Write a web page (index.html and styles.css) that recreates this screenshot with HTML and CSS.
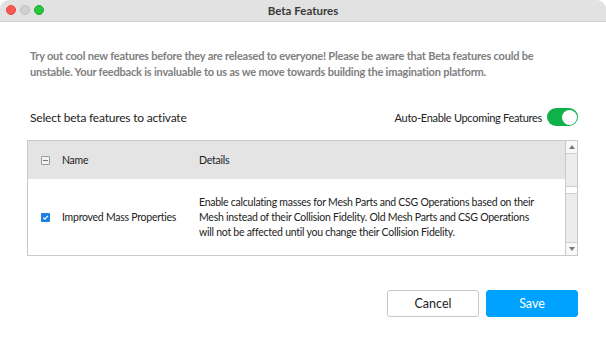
FILE: index.html
```html
<!DOCTYPE html>
<html lang="en">
  <head>
    <meta charset="UTF-8" />
    <title>Beta Features</title>
    <link rel="stylesheet" href="styles.css">
  </head>
  <body>
    <div class="window">
      <div class="titlebar">
        <div class="lights">
          <span class="light close"></span>
          <span class="light min"></span>
          <span class="light max"></span>
        </div>
        <div class="title">Beta Features</div>
      </div>
      <div class="content">
        <p class="intro">
          Try out cool new features before they are released to everyone! Please be aware that Beta features could be
          unstable. Your feedback is invaluable to us as we move towards building the imagination platform.
        </p>
        <div class="section-head">
          <span class="section-title">Select beta features to activate</span>
          <label class="auto">
            <span>Auto-Enable Upcoming Features</span>
            <span class="toggle"><span class="knob"></span></span>
          </label>
        </div>
        <div class="table-box">
          <div class="table-main">
            <div class="row head">
              <div class="cell check"><span class="box partial"></span></div>
              <div class="cell name">Name</div>
              <div class="cell details">Details</div>
            </div>
            <div class="row body-row">
              <div class="cell check">
                <span class="box checked">
                  <svg width="9" height="9" viewBox="0 0 9 9"><path d="M2.2 4.6 L3.8 6.1 L6.9 2.9" fill="none" stroke="#fff" stroke-width="1.3"/></svg>
                </span>
              </div>
              <div class="cell name">Improved Mass Properties</div>
              <div class="cell details">Enable calculating masses for Mesh Parts and CSG Operations based on their Mesh instead of their Collision Fidelity. Old Mesh Parts and CSG Operations will not be affected until you change their Collision Fidelity.</div>
            </div>
          </div>
          <div class="scrollbar">
            <div class="arrow">
              <svg width="6" height="4" viewBox="0 0 6 4"><path d="M0 4 L3 0 L6 4 Z" fill="#777"/></svg>
            </div>
            <div class="track upper"></div>
            <div class="thumb"></div>
            <div class="track lower"></div>
            <div class="arrow">
              <svg width="6" height="4" viewBox="0 0 6 4"><path d="M0 0 L3 4 L6 0 Z" fill="#777"/></svg>
            </div>
          </div>
        </div>
        <div class="actions">
          <button class="btn cancel">Cancel</button>
          <button class="btn save">Save</button>
        </div>
      </div>
    </div>
  </body>
</html>
```

FILE: styles.css
```css
* {
  margin: 0;
  padding: 0;
  box-sizing: border-box;
}
body {
  background-color: #fff;
  font-family: Lato, "Noto Sans", sans-serif;
  color: #222;
}
.window {
  width: 606px;
  height: 345px;
  display: flex;
  flex-direction: column;
  background-color: #fff;
  border-radius: 9px;
  overflow: hidden;
}
.titlebar {
  height: 22px;
  flex-shrink: 0;
  position: relative;
  display: flex;
  align-items: center;
  justify-content: center;
  background-color: #e2e2e2;
  border-bottom: 1px solid #cfcfcf;
}
.lights {
  position: absolute;
  left: 6px;
  top: 5px;
  display: flex;
  gap: 4px;
}
.light {
  width: 10px;
  height: 10px;
  border-radius: 50%;
}
.close {
  background-color: #fd5754;
  border: 1px solid #e2463f;
}
.min {
  background-color: #d0d0d0;
  border: 1px solid #bdbdbd;
}
.max {
  background-color: #28c73f;
  border: 1px solid #1aab29;
}
.title {
  font-size: 11.5px;
  font-weight: bold;
  color: #3a3a3a;
}
.content {
  flex: 1;
  display: flex;
  flex-direction: column;
  padding: 26px 28px 0 30px;
}
.intro {
  font-size: 11px;
  letter-spacing: -0.2px;
  font-weight: bold;
  line-height: 16px;
  color: #808080;
}
.section-head {
  margin-top: 27px;
  height: 20px;
  display: flex;
  align-items: center;
  justify-content: space-between;
}
.section-title {
  font-size: 12px;
  letter-spacing: -0.2px;
}
.auto {
  display: flex;
  align-items: center;
  gap: 5px;
  font-size: 11px;
  letter-spacing: -0.3px;
}
.toggle {
  width: 31px;
  height: 18px;
  border-radius: 9px;
  background-color: #10b04b;
  display: flex;
  align-items: center;
  justify-content: flex-end;
  padding: 0 1.5px;
}
.knob {
  width: 15px;
  height: 15px;
  border-radius: 50%;
  background-color: #fff;
}
.table-box {
  margin-top: 13px;
  margin-left: -3px;
  height: 116px;
  display: flex;
  border: 1px solid #c9c9c9;
}
.table-main {
  flex: 1;
  display: flex;
  flex-direction: column;
}
.row {
  display: flex;
  align-items: center;
  font-size: 10.5px;
  letter-spacing: -0.25px;
}
.head {
  height: 38px;
  background-color: #e4e4e4;
}
.body-row {
  flex: 1;
}
.cell.check {
  width: 34px;
  display: flex;
  justify-content: center;
}
.cell.name {
  width: 137px;
}
.cell.details {
  width: 345px;
  line-height: 15px;
}
.box {
  width: 9px;
  height: 9px;
  display: flex;
  align-items: center;
  justify-content: center;
  border-radius: 1px;
}
.partial {
  border: 1px solid #9a9a9a;
  background-color: #f2f2f2;
}
.partial::after {
  content: "";
  width: 5px;
  height: 1px;
  background-color: #777;
}
.checked {
  background-color: #1b7fe3;
}
.scrollbar {
  width: 12px;
  display: flex;
  flex-direction: column;
  border-left: 1px solid #c9c9c9;
  background-color: #f4f4f4;
}
.arrow {
  height: 12px;
  display: flex;
  align-items: center;
  justify-content: center;
  background-color: #f8f8f8;
}
.track {
  background-color: #ececec;
  border-top: 1px solid #cfcfcf;
  border-bottom: 1px solid #cfcfcf;
}
.upper {
  height: 34px;
}
.thumb {
  height: 6px;
  background-color: #fff;
}
.lower {
  flex: 1;
}
.actions {
  margin-top: 34px;
  display: flex;
  justify-content: flex-end;
  gap: 7px;
}
.btn {
  width: 92px;
  height: 27px;
  border-radius: 3px;
  font-family: Lato, "Noto Sans", sans-serif;
  font-size: 12.5px;
  cursor: pointer;
}
.cancel {
  background-color: #fff;
  border: 1px solid #c8c8c8;
  color: #222;
}
.save {
  background-color: #00a2ff;
  border: 1px solid #00a2ff;
  color: #fff;
}
```
